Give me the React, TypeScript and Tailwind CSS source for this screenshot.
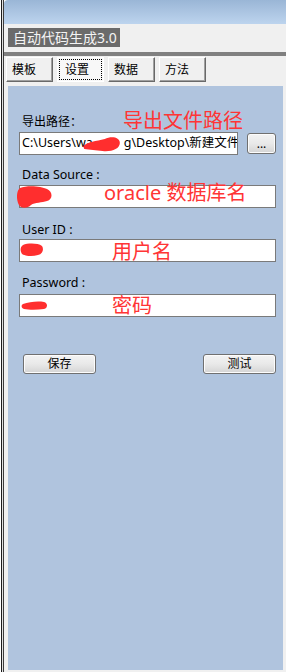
import React from "react";

const CJK = '"Noto Sans", "Noto Sans CJK SC", sans-serif';

function Tab({ label, active }: { label: string; active?: boolean }) {
  if (active) {
    return (
      <div className="w-[47px] h-[25px] border border-white bg-[#f8f8f8] p-[1px]">
        <div className="w-full h-full border border-dotted border-black flex items-center pl-[5px] text-[12px] text-black leading-none">
          {label}
        </div>
      </div>
    );
  }
  return (
    <div className="w-[47px] h-[25px] border-t border-l border-t-white border-l-white border-r border-b border-r-[#696969] border-b-[#696969] shadow-[inset_-1px_-1px_0_#a0a0a0] bg-[#f0f0f0] flex items-center pl-[5px] text-[12px] text-black leading-none">
      {label}
    </div>
  );
}

function WinButton({ label, className = "" }: { label: string; className?: string }) {
  return (
    <div
      className={
        "rounded-[3px] border border-[#707070] bg-linear-to-b from-[#f3f3f3] via-[#e9e9e9] to-[#d4d4d4] flex items-center justify-center text-[12px] text-black leading-none shadow-[inset_0_0_0_1px_#fcfcfc] " +
        className
      }
    >
      {label}
    </div>
  );
}

function Label({ text, className = "" }: { text: string; className?: string }) {
  return <div className={"h-[16px] leading-[16px] pl-[3px] text-[12.5px] text-black " + className}>{text}</div>;
}

export default function App() {
  return (
    <div className="w-[286px] h-[672px] flex bg-white overflow-hidden" style={{ fontFamily: CJK }}>
      <div className="flex h-full">
        <div className="w-px bg-white" />
        <div className="w-px bg-[#1c1c1c]" />
        <div className="w-px bg-[#e2e2e2]" />
        <div className="w-px bg-[#3c3c3c]" />
      </div>
      <div className="flex-1 flex flex-col">
        <div className="h-[24px] rounded-tl-[4px] bg-linear-to-b from-[#9ab6d6] to-[#bdd4ee]" />
        <div className="flex-1 flex flex-col bg-[#f0f0f0]">
          <div className="mt-[4px] ml-[4px] w-[112px] h-[19px] bg-[#6b6b6b] text-[#f4f4f4] text-[14px] leading-[19px] pl-[5px]">
            自动代码生成3.0
          </div>
          <div className="mt-[5px] h-[4px] bg-[#808080]" />
          <div className="flex gap-[4px] ml-[2px] mt-[1px]">
            <Tab label="模板" />
            <Tab label="设置" active />
            <Tab label="数据" />
            <Tab label="方法" />
          </div>
          <div className="mt-[4px] ml-[4px] mr-[3px] mb-[2px] flex-1 bg-[#b0c4de] relative pt-[28px] pl-[11px] pr-[7px] flex flex-col">
            <Label text="导出路径：" className="text-[12px]" />
            <div className="flex mt-[2px]">
              <div className="relative w-[219px] h-[23px] border border-[#7a7a7a] bg-white overflow-hidden flex items-center pl-[2px] text-[12.5px] text-black whitespace-nowrap">
                <span className="shrink-0">C:\Users\wa</span>
                <span className="inline-block shrink-0 w-[31px]" />
                <span className="shrink-0">g\Desktop\新建文件夹</span>
                <svg className="absolute left-[61px] top-[2px]" width="41" height="18" viewBox="0 0 38 18" preserveAspectRatio="none">
                  <path d="M2 11 C6 7, 14 6, 22 4 C28 1, 36 2, 36 8 C36 14, 28 17, 20 16 C14 15, 8 15, 3 14 Z" fill="#ff2e2e" />
                </svg>
              </div>
              <WinButton label="..." className="ml-[9px] w-[29px] h-[21px] mt-[1px]" />
            </div>

            <Label text="Data Source :" className="mt-[12px]" />
            <div className="relative mt-[2px] h-[23px] border border-[#7a7a7a] bg-white" />

            <Label text="User ID :" className="mt-[14px]" />
            <div className="relative mt-[1px] h-[23px] border border-[#7a7a7a] bg-white" />

            <Label text="Password :" className="mt-[13px]" />
            <div className="relative mt-[3px] h-[23px] border border-[#7a7a7a] bg-white" />

            <div className="flex justify-between mt-[37px] pl-[4px]">
              <WinButton label="保存" className="w-[73px] h-[20px]" />
              <WinButton label="测试" className="w-[73px] h-[20px]" />
            </div>

            {/* red scribbles over fields */}
            <svg className="absolute left-[9px] top-[99px]" width="37" height="25" viewBox="0 0 37 25">
              <path d="M3 3 C10 0, 24 1, 30 4 C36 7, 36 14, 30 16 C25 18, 18 17, 14 20 C10 24, 3 24, 1 18 C-1 12, 0 5, 3 3 Z" fill="#ff2e2e" />
            </svg>
            <svg className="absolute left-[12px] top-[157px]" width="24" height="14" viewBox="0 0 24 14">
              <path d="M3 2 C8 0, 18 0, 22 3 C24 6, 23 11, 18 12 C12 14, 5 13, 2 11 C0 8, 0 4, 3 2 Z" fill="#ff2e2e" />
            </svg>
            <svg className="absolute left-[13px] top-[214px]" width="27" height="11" viewBox="0 0 27 11">
              <path d="M2 4 C8 2, 16 1, 23 2 C27 3, 27 8, 23 9 C16 10, 8 10, 3 9 C0 8, 0 5, 2 4 Z" fill="#ff2e2e" />
            </svg>

            {/* red annotations */}
            <div className="absolute left-[115px] top-[25px] text-[20px] leading-[20px] text-[#ff3535] whitespace-nowrap">导出文件路径</div>
            <div className="absolute left-[96px] top-[97px] text-[20px] leading-[20px] text-[#ff3535] whitespace-nowrap">oracle 数据库名</div>
            <div className="absolute left-[104px] top-[156px] text-[20px] leading-[20px] text-[#ff3535] whitespace-nowrap">用户名</div>
            <div className="absolute left-[104px] top-[210px] text-[20px] leading-[20px] text-[#ff3535] whitespace-nowrap">密码</div>
          </div>
        </div>
      </div>
    </div>
  );
}
